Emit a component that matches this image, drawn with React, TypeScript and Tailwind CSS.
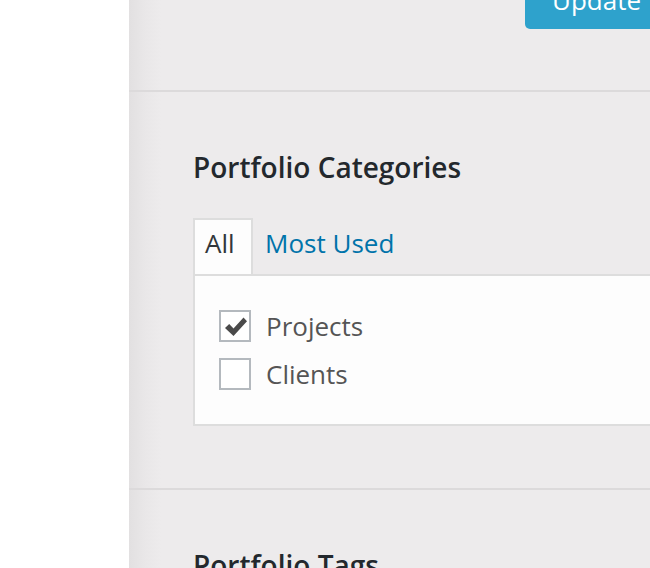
import React from "react";

export default function App() {
  const font = { fontFamily: '"Open Sans", "Noto Sans", sans-serif' };
  return (
    <div className="flex h-[568px] w-[650px] overflow-hidden" style={font}>
      <div className="w-[129px] shrink-0 bg-white" />
      <div className="relative flex w-[521px] shrink-0 flex-col bg-[linear-gradient(to_right,#e2e0e1_0px,#e9e7e8_16px,#edebec_32px,#edebec_100%)]">
        <div className="h-[90px] shrink-0">
          <div className="ml-[396px] -mt-[22px] h-[51px] w-[150px] rounded-[5px] bg-[#2ea2cc] pl-[27px] pt-[4px] text-[26px] leading-[36px] text-white">
            Update
          </div>
        </div>
        <div className="h-[2px] shrink-0 bg-[#dcdadb]" />
        <div className="h-[396px] shrink-0 pl-[64px]">
          <h2 className="mt-[61px] text-[28px] font-semibold leading-[28px] text-[#23282d]">
            Portfolio Categories
          </h2>
          <div className="mt-[37px] flex items-start">
            <div className="relative z-10 -mb-[2px] h-[56px] w-[60px] border-x-2 border-t-2 border-[#dddddd] bg-[#fdfdfd] pl-[10px] pt-[10px] text-[26px] leading-[26px] text-[#32373c]">
              All
            </div>
            <div className="h-[56px] pl-[12px] pt-[12px] text-[26px] leading-[26px] text-[#0073aa]">
              Most Used
            </div>
          </div>
          <div className="flex h-[152px] w-[500px] flex-col gap-[16px] border-2 border-[#dddddd] bg-[#fdfdfd] pl-[24px] pt-[34px]">
            <div className="flex items-center gap-[15px]">
              <div className="flex h-[32px] w-[32px] items-center justify-center border-2 border-[#b4b9be] bg-white">
                <svg width="26" height="24" viewBox="0 0 26 24" className="ml-[1px] mt-[1px]">
                  <path d="M2 13 L6.2 9 L10.5 13.6 L20.5 2.5 L24 6.2 L10.5 21 Z" fill="#4a4a4a" />
                </svg>
              </div>
              <span className="text-[26px] leading-[32px] text-[#555555]">Projects</span>
            </div>
            <div className="flex items-center gap-[15px]">
              <div className="h-[32px] w-[32px] border-2 border-[#b4b9be] bg-white" />
              <span className="text-[26px] leading-[32px] text-[#555555]">Clients</span>
            </div>
          </div>
        </div>
        <div className="h-[2px] shrink-0 bg-[#dcdadb]" />
        <div className="pl-[64px]">
          <h2 className="mt-[61px] text-[28px] font-semibold leading-[28px] text-[#23282d]">
            Portfolio Tags
          </h2>
        </div>
      </div>
    </div>
  );
}
